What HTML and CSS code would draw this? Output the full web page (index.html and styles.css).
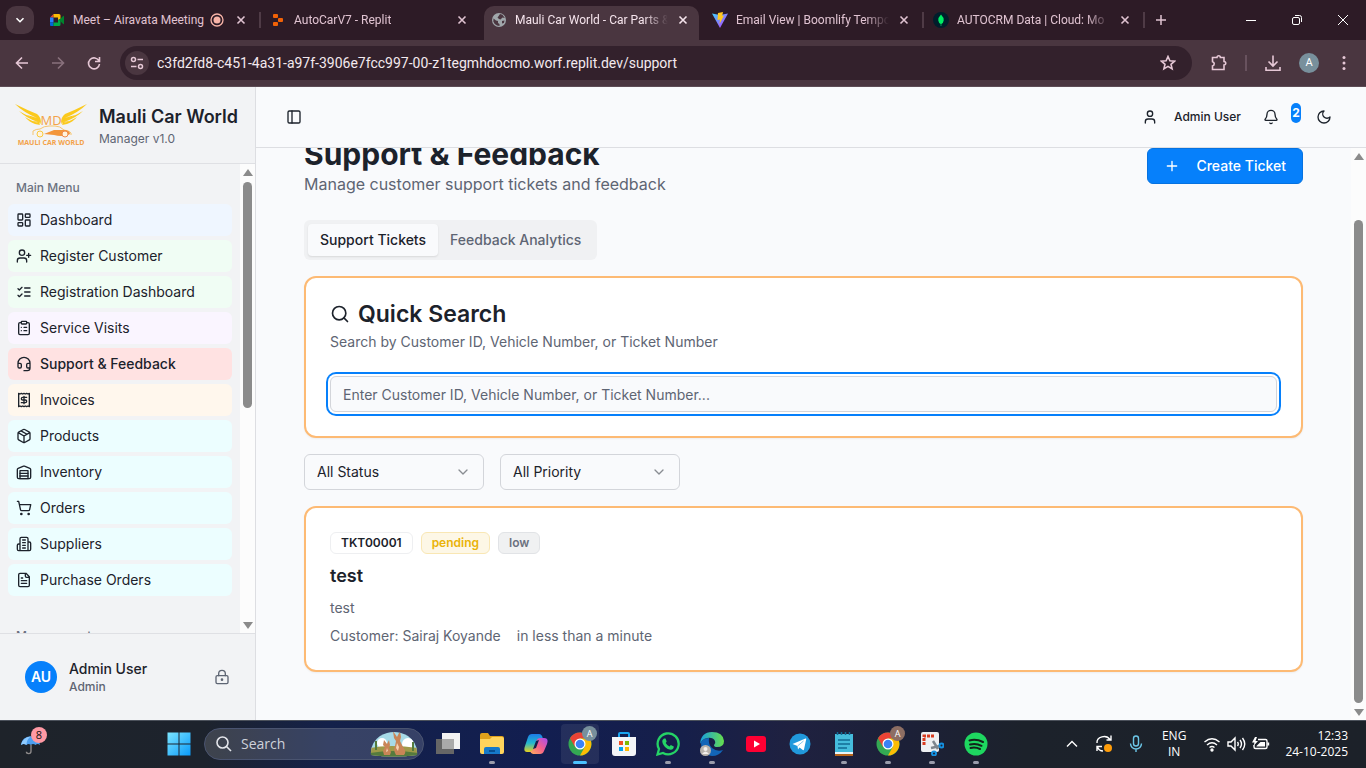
FILE: index.html
```html
<!DOCTYPE html>
<html lang="en">
<head>
<meta charset="utf-8">
<meta name="viewport" content="width=device-width, initial-scale=1">
<title>Mauli Car World - Car Parts &amp; Service</title>
<link rel="stylesheet" href="styles.css">
</head>
<body>
<div class="tabstrip">
  <button class="tab-search" aria-label="Search tabs"><svg class="g10" viewBox="0 0 10 10"><path d="M1.500 3.200 5 6.700 8.500 3.200"/></svg></button>
  <div class="tabs">
    <div class="tab">
      <svg class="fav" viewBox="0 0 16 16"><path fill="#e94335" d="M1 5.500 4.500 2v3.500z"/><path fill="#fbbc04" d="M4.500 2H10q1.500 0 1.500 1.500V7L9 8V5.500H4.500z"/><path fill="#2684fc" d="M1 5.500h3.500v5H1z"/><path fill="#0066da" d="M1 10.500h3.500V14H2q-1 0-1-1z"/><path fill="#00ac47" d="M4.500 10.500H9V8l2.500-1v5.500q0 1.500-1.500 1.500H4.500z"/><path fill="#00832d" d="M10 8l4.200-4q.8-.5.800.500v7q0 1-.8.500z"/></svg>
      <span class="tab-title">Meet – Airavata Meeting</span>
      <svg class="rec" viewBox="0 0 14 14"><circle cx="7" cy="7" r="6" fill="none" stroke="#f8b4a8" stroke-width="1.300"/><circle cx="7" cy="7" r="3.500" fill="#f8b4a8"/></svg>
      <button class="close" aria-label="Close tab"><svg class="g10" viewBox="0 0 10 10"><path d="m1.500 1.500 7 7m0-7-7 7"/></svg></button>
    </div>
    <div class="tab divided">
      <svg class="fav" viewBox="0 0 16 16"><g fill="#f26207"><rect x="3" y="2" width="5" height="4" rx="1"/><rect x="8" y="6" width="5" height="4" rx="1"/><rect x="3" y="10" width="5" height="4" rx="1"/></g></svg>
      <span class="tab-title">AutoCarV7 - Replit</span>
      <button class="close" aria-label="Close tab"><svg class="g10" viewBox="0 0 10 10"><path d="m1.500 1.500 7 7m0-7-7 7"/></svg></button>
    </div>
    <div class="tab active">
      <svg class="fav" viewBox="0 0 16 16"><circle cx="8" cy="8" r="7" fill="#a0a7ab"/><path fill="#4a3640" d="M2.500 6.500 5 8.500l2 .5v2l1.500 1v2L6 13.500Q3 12 2.300 9.500zM9 2l2.500.8L13.800 6l-2.300-.5L9.500 7.500 8 7 6.500 5.500l1-1.200zM11 9l2.500-.5-.6 2.500-1.900.5z"/></svg>
      <span class="tab-title">Mauli Car World - Car Parts &amp;</span>
      <button class="close" aria-label="Close tab"><svg class="g10" viewBox="0 0 10 10"><path d="m1.500 1.500 7 7m0-7-7 7"/></svg></button>
    </div>
    <div class="tab">
      <svg class="fav" viewBox="0 0 16 16"><defs><linearGradient id="vite" x1="0" y1="0" x2="1" y2="1"><stop offset="0" stop-color="#41d1ff"/><stop offset="1" stop-color="#bd34fe"/></linearGradient></defs><path fill="url(#vite)" d="M0 1.500 8 3l8-1.500L8 16z"/><path fill="#ffc81f" d="m6 1 5-1-.8 4 1.800-.4L7.500 12 8 7.500 5.500 8z"/></svg>
      <span class="tab-title">Email View | Boomlify Tempo</span>
      <button class="close" aria-label="Close tab"><svg class="g10" viewBox="0 0 10 10"><path d="m1.500 1.500 7 7m0-7-7 7"/></svg></button>
    </div>
    <div class="tab divided">
      <svg class="fav" viewBox="0 0 16 16"><circle cx="8" cy="8" r="8" fill="#001e2b"/><path fill="#00ed64" d="M8 2.500q3 3 2.700 6Q10.400 11 8.300 12v2h-.6v-2Q5.600 11 5.300 8.500 5 5.500 8 2.500z"/></svg>
      <span class="tab-title">AUTOCRM Data | Cloud: Mo</span>
      <button class="close" aria-label="Close tab"><svg class="g10" viewBox="0 0 10 10"><path d="m1.500 1.500 7 7m0-7-7 7"/></svg></button>
    </div>
    <button class="new-tab" aria-label="New tab"><svg viewBox="0 0 12 12"><path d="M6 1v10M1 6h10"/></svg></button>
  </div>
  <div class="window-controls">
    <button aria-label="Minimize"><svg viewBox="0 0 12 12"><path d="M1 6.500h10"/></svg></button>
    <button aria-label="Restore"><svg viewBox="0 0 12 12"><rect x="1.500" y="3.500" width="7" height="7" rx="1.500"/><path d="M4 1.500h4.500a2 2 0 0 1 2 2V8"/></svg></button>
    <button aria-label="Close window"><svg viewBox="0 0 12 12"><path d="m1 1 10 10M11 1 1 11"/></svg></button>
  </div>
</div>

<div class="toolbar">
  <button class="nav" aria-label="Back"><svg viewBox="0 0 16 16"><path d="M14 8H2.500M8 2.500 2.500 8 8 13.500"/></svg></button>
  <button class="nav off" aria-label="Forward" disabled><svg viewBox="0 0 16 16"><path d="M2 8h11.500M8 2.500 13.500 8 8 13.500"/></svg></button>
  <button class="nav" aria-label="Reload"><svg viewBox="0 0 16 16"><path d="M13 6A5.500 5.500 0 1 0 13.500 9M13.500 2v4.500H9"/></svg></button>
  <div class="omnibox">
    <button class="site-info" aria-label="Site information"><svg viewBox="0 0 14 14"><circle cx="3.500" cy="3.500" r="2"/><path d="M7.500 3.500H13M1 10.500h5.500"/><circle cx="10.500" cy="10.500" r="2"/></svg></button>
    <input class="url" type="text" aria-label="Address" value="c3fd2fd8-c451-4a31-a97f-3906e7fcc997-00-z1tegmhdocmo.worf.replit.dev/support">
    <button class="nav" aria-label="Bookmark this tab"><svg viewBox="0 0 16 16"><path d="m8 1.500 1.900 4.300 4.600.4-3.500 3.100 1.100 4.600L8 11.400l-4.100 2.500L5 9.300 1.500 6.200l4.600-.4z"/></svg></button>
  </div>
  <div class="tools">
    <button class="nav big" aria-label="Extensions"><svg viewBox="0 0 18 18"><path d="M2.500 3.500H7a1.700 1.700 0 0 1 3.400 0H14v4a1.700 1.700 0 0 1 0 3.500v4.500H2.500V12a2.200 2.200 0 0 0 0-4.300z"/></svg></button>
    <span class="tool-sep"></span>
    <button class="nav big" aria-label="Downloads"><svg viewBox="0 0 18 18"><path d="M9 1.500V12M4.500 7.500 9 12l4.500-4.500M2 13v3.200h14V13"/></svg></button>
    <button class="profile" aria-label="Profile">A</button>
    <button class="nav" aria-label="Menu"><svg class="dots" viewBox="0 0 16 16"><circle cx="8" cy="2.500" r="1.500"/><circle cx="8" cy="8" r="1.500"/><circle cx="8" cy="13.500" r="1.500"/></svg></button>
  </div>
</div>

<div class="app">
  <aside class="sidebar">
    <div class="brand">
      <svg class="brand-logo" viewBox="0 0 72 44" role="img" aria-label="Mauli Car World logo">
        <g fill="#fbc91d"><path d="M0 1q12 6 22 10 4 3 4 9-8-5-15-8 6 1 11 3Q8 9 0 1z"/><path d="M4 8q10 6 18 8l4 5q-5-2-10-3 4 0 7 1Q11 15 4 8z"/><path d="M10 14q8 5 14 6l1 2-5-1Q14 19 10 14z"/><path d="M72 1q-12 6-22 10-4 3-4 9 8-5 15-8-6 1-11 3Q64 9 72 1z"/><path d="M68 8q-10 6-18 8l-4 5q5-2 10-3-4 0-7 1 12-4 19-11z"/><path d="M62 14q-8 5-14 6l-1 2 5-1q6-2 10-7z"/></g>
        <text class="logo-mark" x="36" y="22" text-anchor="middle" font-size="13" fill="#f3a24a">MD</text>
        <path fill="none" stroke="#f7c56e" d="M18 32v-4q3-2 7-2 4-3 9-3h6q5 0 9 4 6 1 7 3v2"/><path fill="#f3963b" d="m29 31 10-4h12q4 1 4 4l-2 1q-7 2-14 0z"/><circle cx="25" cy="31" r="3" fill="#fff3dc" stroke="#f9c93e"/><circle cx="50" cy="31" r="3" fill="#fff3dc" stroke="#ee8a4c"/>
        <text x="36" y="42" text-anchor="middle" font-size="7" fill="#f3a24a">MAULI CAR WORLD</text>
      </svg>
      <div>
        <div class="brand-name">Mauli Car World</div>
        <div class="brand-sub">Manager v1.0</div>
      </div>
    </div>
    <div class="side-body">
      <nav class="menu">
        <div class="menu-label">Main Menu</div>
        <a class="item blue" href="#"><svg class="ic" viewBox="0 0 24 24"><rect x="3" y="3" width="7" height="9" rx="1"/><rect x="14" y="3" width="7" height="5" rx="1"/><rect x="14" y="12" width="7" height="9" rx="1"/><rect x="3" y="16" width="7" height="5" rx="1"/></svg>Dashboard</a>
        <a class="item green" href="#"><svg class="ic" viewBox="0 0 24 24"><path d="M16 21v-2a4 4 0 0 0-4-4H6a4 4 0 0 0-4 4v2M19 8v6M22 11h-6"/><circle cx="9" cy="7" r="4"/></svg>Register Customer</a>
        <a class="item green" href="#"><svg class="ic" viewBox="0 0 24 24"><path d="m3 17 2 2 4-4M3 7l2 2 4-4M13 6h8M13 12h8M13 18h8"/></svg>Registration Dashboard</a>
        <a class="item purple" href="#"><svg class="ic" viewBox="0 0 24 24"><rect x="8" y="2" width="8" height="4" rx="1"/><path d="M16 4h2a2 2 0 0 1 2 2v14a2 2 0 0 1-2 2H6a2 2 0 0 1-2-2V6a2 2 0 0 1 2-2h2M12 11h4M12 16h4M8 11h.01M8 16h.01"/></svg>Service Visits</a>
        <a class="item red current" href="#" aria-current="page"><svg class="ic" viewBox="0 0 24 24"><path d="M3 11h3a2 2 0 0 1 2 2v3a2 2 0 0 1-2 2H5a2 2 0 0 1-2-2v-5Zm0 0a9 9 0 1 1 18 0m0 0v5a2 2 0 0 1-2 2h-1a2 2 0 0 1-2-2v-3a2 2 0 0 1 2-2h3ZM21 16v2a4 4 0 0 1-4 4h-5"/></svg>Support &amp; Feedback</a>
        <a class="item orange" href="#"><svg class="ic" viewBox="0 0 24 24"><path d="M4 2v20l2-1 2 1 2-1 2 1 2-1 2 1 2-1 2 1V2l-2 1-2-1-2 1-2-1-2 1-2-1-2 1ZM16 8h-6a2 2 0 1 0 0 4h4a2 2 0 1 1 0 4H8M12 17.500v-11"/></svg>Invoices</a>
        <a class="item cyan" href="#"><svg class="ic" viewBox="0 0 24 24"><path d="M11 21.730a2 2 0 0 0 2 0l7-4A2 2 0 0 0 21 16V8a2 2 0 0 0-1-1.730l-7-4a2 2 0 0 0-2 0l-7 4A2 2 0 0 0 3 8v8a2 2 0 0 0 1 1.730zM12 22V12M3.290 7 12 12l8.710-5M7.500 4.270l9 5.150"/></svg>Products</a>
        <a class="item cyan" href="#"><svg class="ic" viewBox="0 0 24 24"><path d="M22 8.350V20a2 2 0 0 1-2 2H4a2 2 0 0 1-2-2V8.350A2 2 0 0 1 3.260 6.500l8-3.200a2 2 0 0 1 1.480 0l8 3.200A2 2 0 0 1 22 8.350ZM6 18h12M6 14h12"/><rect x="6" y="10" width="12" height="12"/></svg>Inventory</a>
        <a class="item cyan" href="#"><svg class="ic" viewBox="0 0 24 24"><circle cx="8" cy="21" r="1"/><circle cx="19" cy="21" r="1"/><path d="M2.050 2.050h2l2.660 12.420a2 2 0 0 0 2 1.580h9.780a2 2 0 0 0 1.950-1.570l1.650-7.430H5.120"/></svg>Orders</a>
        <a class="item cyan" href="#"><svg class="ic" viewBox="0 0 24 24"><path d="M6 22V4a2 2 0 0 1 2-2h8a2 2 0 0 1 2 2v18ZM6 12H4a2 2 0 0 0-2 2v6a2 2 0 0 0 2 2h2M18 9h2a2 2 0 0 1 2 2v9a2 2 0 0 1-2 2h-2M10 6h4M10 10h4M10 14h4M10 18h4"/></svg>Suppliers</a>
        <a class="item cyan" href="#"><svg class="ic" viewBox="0 0 24 24"><path d="M15 2H6a2 2 0 0 0-2 2v16a2 2 0 0 0 2 2h12a2 2 0 0 0 2-2V7ZM14 2v4a2 2 0 0 0 2 2h4M10 9H8M16 13H8M16 17H8"/></svg>Purchase Orders</a>
        <div class="menu-label next">Management</div>
      </nav>
      <div class="scroll" aria-hidden="true"><span class="up"></span><span class="track"><span class="thumb side-thumb"></span></span><span class="down"></span></div>
    </div>
    <div class="account">
      <span class="avatar">AU</span>
      <div class="account-text">
        <div class="account-name">Admin User</div>
        <div class="account-role">Admin</div>
      </div>
      <button class="icon-btn muted" aria-label="Change password"><svg class="ic" viewBox="0 0 24 24"><circle cx="12" cy="16" r="1"/><rect x="3" y="10" width="18" height="12" rx="2"/><path d="M7 10V7a5 5 0 0 1 10 0v3"/></svg></button>
    </div>
  </aside>

  <main class="main">
    <header class="topbar">
      <button class="icon-btn" aria-label="Toggle sidebar"><svg class="ic" viewBox="0 0 24 24"><rect x="3" y="3" width="18" height="18" rx="2"/><path d="M9 3v18"/></svg></button>
      <div class="top-right">
        <button class="user-btn"><svg class="ic" viewBox="0 0 24 24"><path d="M19 21v-2a4 4 0 0 0-4-4H9a4 4 0 0 0-4 4v2"/><circle cx="12" cy="7" r="4"/></svg>Admin User</button>
        <button class="bell-btn" aria-label="Notifications, 2 new"><svg class="ic" viewBox="0 0 24 24"><path d="M10.268 21a2 2 0 0 0 3.464 0M3.262 15.326A1 1 0 0 0 4 17h16a1 1 0 0 0 .74-1.673C19.410 13.956 18 12.499 18 8A6 6 0 0 0 6 8c0 4.499-1.411 5.956-2.738 7.326"/></svg><span class="count">2</span></button>
        <button class="icon-btn" aria-label="Toggle theme"><svg class="ic" viewBox="0 0 24 24"><path d="M12 3a6 6 0 0 0 9 9 9 9 0 1 1-9-9Z"/></svg></button>
      </div>
    </header>
    <div class="view">
      <div class="content">
        <div class="page-head">
          <div>
            <h1>Support &amp; Feedback</h1>
            <p class="lead">Manage customer support tickets and feedback</p>
          </div>
          <button class="primary"><svg class="ic" viewBox="0 0 24 24"><path d="M5 12h14M12 5v14"/></svg>Create Ticket</button>
        </div>
        <div class="segmented" role="tablist">
          <button class="seg on" role="tab" aria-selected="true">Support Tickets</button>
          <button class="seg" role="tab" aria-selected="false">Feedback Analytics</button>
        </div>
        <section class="card">
          <h2><svg class="ic lg" viewBox="0 0 24 24"><circle cx="11" cy="11" r="8"/><path d="m21 21-4.300-4.300"/></svg>Quick Search</h2>
          <p class="desc"><label for="q">Search by Customer ID, Vehicle Number, or Ticket Number</label></p>
          <input class="field" id="q" type="text" placeholder="Enter Customer ID, Vehicle Number, or Ticket Number...">
        </section>
        <div class="filters">
          <div class="pick"><select aria-label="Status"><option>All Status</option><option>Pending</option></select><svg class="ic" viewBox="0 0 24 24"><path d="m6 9 6 6 6-6"/></svg></div>
          <div class="pick"><select aria-label="Priority"><option>All Priority</option><option>Low</option></select><svg class="ic" viewBox="0 0 24 24"><path d="m6 9 6 6 6-6"/></svg></div>
        </div>
        <article class="card">
          <div class="badges"><span class="badge">TKT00001</span><span class="badge pending">pending</span><span class="badge low">low</span></div>
          <h3>test</h3>
          <p class="body">test</p>
          <div class="meta"><span>Customer: Sairaj Koyande</span><span>in less than a minute</span></div>
        </article>
      </div>
      <div class="scroll" aria-hidden="true"><span class="up"></span><span class="track end"><span class="thumb main-thumb"></span></span><span class="down"></span></div>
    </div>
  </main>
</div>

<footer class="taskbar">
  <button class="weather" aria-label="Widgets"><svg viewBox="0 0 24 24"><path d="M12 13v7q0 2.500-2.500 2.500T7 20.500" fill="none" stroke="#8d8a8a" stroke-width="1.500"/><path fill="#4d9ff0" d="M1 13Q2 4 12 3.500 20 4 22 13q-3-2-5 0-3-2-5 0-3-2-5 0-3-2-6 0z"/><path fill="#8fcbff" d="M7 13q0-6 5-9.500Q3 5 1 13q3-2 6 0z"/></svg><span class="weather-count">8</span></button>
  <div class="dock">
    <button class="app-btn" aria-label="Start"><svg viewBox="0 0 24 24"><defs><linearGradient id="win" x1="0" y1="0" x2="1" y2="1"><stop offset="0" stop-color="#7ce5ff"/><stop offset="1" stop-color="#0a9bfa"/></linearGradient></defs><path fill="url(#win)" d="M.5.500h11v11H.5zm12 0h11v11h-11zm-12 12h11v11H.5zm12 0h11v11h-11z"/></svg></button>
    <div class="dock-search">
      <svg viewBox="0 0 16 16"><circle cx="6.500" cy="6.500" r="5.500"/><path d="m10.500 10.500 4.500 4.500"/></svg>
      <input type="text" placeholder="Search" aria-label="Search Windows">
      <svg class="scene" viewBox="0 0 48 26"><defs><clipPath id="dome"><path d="M1 24Q0 12 10 5 24-3 38 5q10 7 9 19-23 3-46 0z"/></clipPath></defs><g clip-path="url(#dome)"><path fill="#a7dbe8" d="M0 0h48v26H0z"/><circle cx="12" cy="12" r="5" fill="#fff"/><circle cx="38" cy="13" r="6" fill="#fff"/><path fill="#9f9a49" d="M0 17q20-4 48 0v9H0z"/><path fill="#567b3d" d="M0 22q24-4 48 0v4H0zM5 10h2v9H5zM42 11h2v9h-2z"/><path fill="#c98557" d="m23 0 4 6 3-6 1 6-1 4 3 6q4 5 1 8h-8q-3-4-1-9l1-5-2-3zM14 9l3 4 2-4 1 5-1 3 2 4-1 3h-6l-1-4 2-4-2-2z"/><path fill="#f4d3b4" d="m27 12 2 4-1 4-2-3zM17 17l1 3-2 1z"/></g></svg>
    </div>
    <button class="app-btn" aria-label="Task view"><svg viewBox="0 0 24 24"><path fill="#666" d="M0 7h18v15H0z"/><path fill="#f2f2f2" d="M6 1h18v16H6z"/><path fill="#aaa" d="M6 7h12v10H6z"/></svg></button>
    <button class="app-btn run" aria-label="File Explorer"><svg class="wide" viewBox="0 0 26 24"><path fill="#e0a11b" d="M1 3q0-2 2-2h6l2 3h12q2 0 2 2v5H1z"/><path fill="#ffd45c" d="M1 7h10l2-2h10q2 0 2 2v13q0 2-2 2H3q-2 0-2-2z"/><path fill="#1679c9" d="M5 22v-5q0-2 2-2h12q2 0 2 2v5z"/><path stroke="#074f91" stroke-width="2" d="M10 19h6"/></svg></button>
    <button class="app-btn" aria-label="Copilot"><svg viewBox="0 0 24 24"><defs><linearGradient id="cpa" x1="0" y1="0" x2="0" y2="1"><stop offset="0" stop-color="#1d7ce8"/><stop offset=".5" stop-color="#22b8cf"/><stop offset="1" stop-color="#e8d21d"/></linearGradient><linearGradient id="cpb" x1="1" y1="0" x2="0" y2="1"><stop offset="0" stop-color="#a54df0"/><stop offset=".5" stop-color="#f45f8c"/><stop offset="1" stop-color="#ffb15a"/></linearGradient></defs><path fill="url(#cpa)" d="M8 2h7q3 0 4 5h-3q-3 0-4 4l-2 6q-1 3-4 3H3q-4 0-2-6l3-9q1-3 4-3z"/><path fill="url(#cpb)" d="M16 22H9q-2 0-3-3 3 0 4-3l2-6q1-4 4-4h4q5 0 3 6l-3 7q-1 3-4 3z"/><path fill="#14204d" d="m12 9 3-1-3 8-3 1z"/></svg></button>
    <button class="app-btn run focused" aria-label="Google Chrome"><svg viewBox="0 0 24 24"><circle cx="12" cy="12" r="11.500" fill="#34a853"/><path fill="#ea4335" d="M2 6.300A11.500 11.500 0 0 1 22 6.500H12L7 15z"/><path fill="#fbbc05" d="M22 6.500A11.500 11.500 0 0 1 12 23.500l5-9-5-8z"/><circle cx="12" cy="12" r="5.500" fill="#fff"/><circle cx="12" cy="12" r="4.300" fill="#3b82f6"/></svg><span class="who">A</span></button>
    <button class="app-btn" aria-label="Microsoft Store"><svg viewBox="0 0 24 24"><path fill="none" stroke="#1ba5ef" stroke-width="2" d="M7 6V2q0-1 1-1h8q1 0 1 1v4"/><path fill="#f3f5f7" d="M0 5h24v16q0 3-3 3H3q-3 0-3-3z"/><path fill="#f25022" d="M7 9h4v4H7z"/><path fill="#7fba00" d="M13 9h4v4h-4z"/><path fill="#00a4ef" d="M7 15h4v4H7z"/><path fill="#ffb900" d="M13 15h4v4h-4z"/></svg></button>
    <button class="app-btn run" aria-label="WhatsApp"><svg viewBox="0 0 24 24"><path fill="none" stroke="#25d366" stroke-width="2.300" d="M1.500 22.500 3 17A10.500 10.500 0 1 1 7 21z"/><path fill="#25d366" d="M8 6.500h1.500l1.200 3-1 1.500q1.300 2.500 3.800 3.500l1.300-1.500 3 1.500q0 3-3 3.300Q12 18 9 15 5.500 11 6.500 8z"/></svg></button>
    <button class="app-btn run" aria-label="Microsoft Edge"><svg viewBox="0 0 24 24"><defs><linearGradient id="edge" x1="0" y1="0" x2="1" y2="0"><stop offset="0" stop-color="#179de2"/><stop offset="1" stop-color="#67df4b"/></linearGradient></defs><path fill="#1265b8" d="M1 10q3-4 8-4-1 6 3 10 5 4 11 2-4 6-11 6Q1 23 1 10z"/><path fill="url(#edge)" d="M0 12Q1 0 12 0q11 0 12 9 0 6-7 6-3 0-3-2 2-2 1-4-2-4-8-3-5 1-7 6z"/><circle cx="5.500" cy="18.500" r="5.500" fill="#b9b3ad"/><circle cx="5.500" cy="17" r="2" fill="#f3efec"/><path fill="#f3efec" d="M2 22q3.500-5 7 0z"/></svg></button>
    <button class="app-btn" aria-label="YouTube"><svg viewBox="0 0 24 24"><rect x="2" y="4" width="20" height="16" rx="3" fill="#ff0033"/><path fill="#fff" d="m10 8.500 6 3.500-6 3.500z"/></svg></button>
    <button class="app-btn" aria-label="Telegram"><svg viewBox="0 0 24 24"><circle cx="12" cy="12" r="10.500" fill="#2199dc"/><path fill="#fff" d="m4.500 12 13-5.500q1-.3.700.8L16 17.500q-.3 1-1.200.5L11.500 15.500 10 17.500l-.5-3.500z"/><path stroke="#87c8ea" d="m9.500 14 6-5"/></svg></button>
    <button class="app-btn run" aria-label="Notepad"><svg viewBox="0 0 24 24"><path fill="#45bcdc" d="M3 2h18v18H3z"/><path fill="#e8f4f8" d="M3 20h18v2H3z"/><path fill="#b8651b" d="M3 22h18v2H3z"/><path stroke="#126b94" stroke-width="1.500" d="M6 8h12M6 12h12M6 16h9M5.500 0v3M9.500 0v3M13.500 0v3M17.500 0v3"/></svg></button>
    <button class="app-btn run" aria-label="Google Chrome, second profile"><svg viewBox="0 0 24 24"><circle cx="12" cy="12" r="11.500" fill="#34a853"/><path fill="#ea4335" d="M2 6.300A11.500 11.500 0 0 1 22 6.500H12L7 15z"/><path fill="#fbbc05" d="M22 6.500A11.500 11.500 0 0 1 12 23.500l5-9-5-8z"/><circle cx="12" cy="12" r="5.500" fill="#fff"/><circle cx="12" cy="12" r="4.300" fill="#3b82f6"/></svg><span class="who brown">A</span></button>
    <button class="app-btn run" aria-label="Snipping Tool"><svg viewBox="0 0 24 24"><rect x="1" width="18" height="20" rx="2" fill="#eef0f2"/><path fill="none" stroke="#d83b1f" stroke-width="3" stroke-dasharray="3 1" d="M4 13V4h11"/><path stroke="#7d858d" stroke-width="2.500" d="m13 9 5 8M20 14l-9 2"/><g fill="none" stroke="#1491e0" stroke-width="2"><circle cx="21.500" cy="13.500" r="2"/><circle cx="14" cy="21.500" r="2"/></g></svg></button>
    <button class="app-btn run" aria-label="Spotify"><svg viewBox="0 0 24 24"><circle cx="12" cy="12" r="11.500" fill="#1ed760"/><path fill="none" stroke="#12241a" stroke-linecap="round" stroke-width="2" d="M5.500 8.500Q12 6.500 19 10M6 12.500q6-1.700 11.500 1.300M6.500 16q5-1.200 9.500 1"/></svg></button>
  </div>
  <div class="tray">
    <button aria-label="Show hidden icons"><svg viewBox="0 0 20 20"><path d="m5 12.500 5-5 5 5"/></svg></button>
    <button aria-label="Sync"><svg viewBox="0 0 20 20"><path d="M3 9a7 6 0 0 1 13-3.500M17 1.500V6h-4.500M9 17q-4 0-5.500-4M8 12.500H3V17"/><circle cx="14" cy="14" r="4" fill="#ff9d0a" stroke="none"/></svg></button>
    <button aria-label="Microphone"><svg viewBox="0 0 20 20"><g stroke="#6cc7e8"><rect x="7.500" y="2" width="5" height="10" rx="2.500"/><path d="M4.500 9.500a5.500 5.500 0 0 0 11 0M10 15v3"/></g></svg></button>
    <button class="lang">ENG<br>IN</button>
    <button class="status" aria-label="Network, sound and battery"><svg viewBox="0 0 20 20"><path d="M2.500 8Q10 1.500 17.500 8M5 11q5-4.500 10 0M7.500 13.500q2.500-2 5 0"/><circle cx="10" cy="16" r="1" fill="#fff"/></svg><svg viewBox="0 0 20 20"><path d="M2 8h3l4-4v12l-4-4H2zM11.500 8q1.500 2 0 4M14 6q3 4 0 8M16.500 4q4.500 6 0 12"/></svg><svg viewBox="0 0 20 20"><path d="M8 5.500h7.500q1.500 0 1.500 1.500v6q0 1.500-1.500 1.500h-10Q4 14.500 4 13v-2M18.500 8.500v3"/><path fill="#fff" stroke="none" d="M10.500 8H15v4.500H6.500V12zM5 3 2 8.500h2.500L3.500 12 8 7H5.500L7 3z"/></svg></button>
    <button class="clock">12:33<br>24-10-2025</button>
  </div>
</footer>
</body>
</html>
```

FILE: styles.css
```css
* { box-sizing: border-box; }
body {
  margin: 0;
  height: 100vh;
  display: flex;
  flex-direction: column;
  overflow: hidden;
  font-family: Inter, "Liberation Sans", sans-serif;
  font-size: 14px;
  line-height: 20px;
  color: #1c222b;
  background: #f9fafc;
}
button, input, select { font: inherit; color: inherit; }
button { border: 0; padding: 0; background: none; display: flex; align-items: center; justify-content: center; }
h1, h2, h3, p { margin: 0; }
a { color: inherit; text-decoration: none; }
svg { display: block; flex: none; }
.ic { width: 16px; height: 16px; fill: none; stroke: currentColor; stroke-width: 2; stroke-linecap: round; stroke-linejoin: round; }
.lg { width: 20px; height: 20px; }

/* Browser tabs */
.tabstrip, .toolbar, .taskbar { flex: none; display: flex; align-items: center; }
.tabstrip, .toolbar { font-family: Roboto, "Open Sans", sans-serif; }
.tabstrip { height: 40px; padding-left: 6px; background: #2d1b26; color: #e0c3d1; font-size: 12px; }
.tab-search { width: 28px; height: 28px; border-radius: 10px; background: #4a3640; color: #fff; }
.g10 { width: 10px; height: 10px; fill: none; stroke: currentColor; stroke-width: 1.6; }
.tabs { flex: 1; min-width: 0; height: 40px; padding-left: 4px; display: flex; align-items: center; }
.tab { position: relative; flex: 0 1 221px; min-width: 0; display: flex; align-items: center; gap: 8px; height: 40px; padding: 0 11px 0 11px; }
.tab-title { flex: 1; min-width: 0; overflow: hidden; white-space: nowrap; mask-image: linear-gradient(to right, #000 calc(100% - 24px), transparent); }
.fav { width: 16px; height: 16px; }
.rec { width: 14px; height: 14px; margin-left: -4px; }
.close { width: 14px; height: 14px; }
.tab:first-child .tab-title { mask-image: none; }
.rec + .close { margin-left: 2px; }
.divided::before { content: ""; position: absolute; left: 0; top: 12px; width: 2px; height: 16px; background: #4f3b46; }
.divided + .new-tab { border-left: 2px solid #4f3b46; }
.active { color: #f5e4ec; }
.active::before { content: ""; position: absolute; z-index: 0; left: 4px; right: 2px; top: 6px; bottom: 0; border-radius: 10px 10px 0 0; background: #4a3640; }
.active > * { z-index: 1; }
.new-tab { height: 16px; padding-left: 10px; }
.new-tab svg, .window-controls svg { width: 12px; height: 12px; fill: none; stroke: currentColor; stroke-width: 1.5; }
.window-controls { display: flex; color: #fff; }
.window-controls button { width: 46px; height: 40px; }
.window-controls svg { stroke-width: 1; }

/* Address bar */
.toolbar { height: 47px; padding: 0 14px; gap: 20px; background: #4a3640; border-bottom: 1px solid #5d4c55; color: #e6c8d6; }
.nav { width: 16px; height: 16px; }
.nav svg { width: 16px; height: 16px; fill: none; stroke: currentColor; stroke-width: 1.6; }
.nav .dots { fill: currentColor; stroke: none; }
.off { opacity: .4; }
.big, .nav.big svg { width: 18px; height: 18px; }
.omnibox { flex: 1; min-width: 0; height: 34px; margin: 0 -2px; display: flex; align-items: center; gap: 8px; padding: 0 16px 0 5px; border-radius: 17px; background: #33212c; }
.site-info { width: 24px; height: 24px; border-radius: 12px; background: #4a3640; }
.site-info svg { width: 14px; height: 14px; fill: none; stroke: currentColor; stroke-width: 1.5; }
.url { flex: 1; min-width: 0; border: 0; padding: 0; outline: 0; background: none; font-size: 14px; color: #f3e9ee; }
.tools { display: flex; align-items: center; gap: 17px; }
.tool-sep { width: 2px; height: 16px; background: #68525e; }
.profile { width: 20px; height: 20px; border-radius: 10px; background: #78909c; color: #fff; font-size: 11px; }

/* App shell */
.app { flex: 1; min-height: 0; display: flex; }
.sidebar { width: 256px; flex: none; display: flex; flex-direction: column; background: #f2f3f5; border-right: 1px solid #dddee2; }
.brand { display: flex; align-items: center; gap: 12px; padding: 16px 16px 16px 15px; border-bottom: 1px solid #dfe0e4; }
.brand-logo { width: 72px; height: 44px; font-family: "Open Sans", sans-serif; font-weight: 700; }
.logo-mark { font-weight: 400; }
.brand-name { font-size: 18px; line-height: 28px; font-weight: 600; white-space: nowrap; }
.brand-sub { font-size: 12px; line-height: 16px; color: #5e6573; }
.side-body { flex: 1; min-height: 0; display: flex; overflow: hidden; }
.menu { flex: 1; display: flex; flex-direction: column; gap: 4px; padding: 8px; }
.menu-label { flex: none; padding: 0 8px; font-size: 12px; line-height: 32px; margin-bottom: -4px; font-weight: 500; color: #6b7180; }
.next { margin-top: 20px; }
.item { flex: none; height: 32px; display: flex; align-items: center; gap: 8px; padding: 0 8px; border-radius: 6px; }
.blue { background: #eff6ff; }
.green { background: #f0fdf4; }
.purple { background: #faf5ff; }
.red { background: #ffe2e2; }
.orange { background: #fff7ed; }
.cyan { background: #ecfeff; }
.current { font-weight: 500; }
.scroll { width: 15px; flex: none; display: flex; flex-direction: column; align-items: center; gap: 6px; padding: 5px 0 4px; background: #fcfcfc; }
.up, .down { border: 5px solid transparent; }
.up { border-top-width: 0; border-bottom: 7px solid #8b8b8b; }
.down { border-bottom-width: 0; border-top: 7px solid #8b8b8b; }
.track { flex: 1; display: flex; }
.end { align-items: flex-end; }
.thumb { width: 9px; border-radius: 5px; background: #8b8b8b; }
.side-thumb { height: 52%; }
.main-thumb { height: 90%; }
.account { display: flex; align-items: center; gap: 12px; padding: 24px 24px 24px 25px; border-top: 1px solid #dfe0e4; height: 87px; }
.avatar { width: 32px; height: 32px; border-radius: 16px; background: #0680fb; color: #fff; display: grid; place-items: center; font-weight: 600; }
.account-text { flex: 1; }
.account-name { line-height: 20px; font-weight: 500; }
.account-role { font-size: 12px; line-height: 16px; font-weight: 500; color: #5e6573; }
.icon-btn { width: 16px; height: 16px; margin: 0 1px; }
.muted { color: #5e6573; }

.main { flex: 1; min-width: 0; display: flex; flex-direction: column; }
.topbar { height: 61px; flex: none; display: flex; align-items: center; justify-content: space-between; padding: 0 33px 0 29px; border-bottom: 1px solid #dddee2; }
.top-right { display: flex; align-items: center; gap: 14px; }
.user-btn { gap: 16px; margin-right: 8px; font-size: 12px; font-weight: 500; }
.bell-btn { gap: 12px; }
.count { margin-bottom: 8px; width: 10px; border-radius: 5px; background: #0680fb; color: #fff; font-size: 12px; font-weight: 700; line-height: 20px; }
.view { flex: 1; min-height: 0; display: flex; overflow: hidden; }
/* Scrolled part-way down, so the heading runs under the top bar */
.content { flex: 1; min-width: 0; display: flex; flex-direction: column; gap: 16px; margin-top: -12px; padding: 0 48px; }
.page-head { display: flex; align-items: center; justify-content: space-between; margin-bottom: 8px; }
h1 { font-size: 30px; line-height: 36px; font-weight: 700; }
.lead { font-size: 16px; line-height: 24px; color: #5e6573; }
.primary { gap: 16px; height: 36px; padding: 0 16px; border: 1px solid #0672e0; border-radius: 6px; background: #0680fb; color: #fff; font-weight: 500; }
.segmented { align-self: flex-start; display: flex; height: 40px; padding: 4px; border-radius: 6px; background: #f0f1f3; color: #5e6573; }
.seg { padding: 0 12px; border-radius: 4px; font-weight: 500; }
.on { background: #f9fafc; color: #1c222b; box-shadow: 0 1px 2px #0000001a; }
.card { padding: 24px; background: #fff; border: 2px solid #fdba74; border-radius: 12px; box-shadow: 0 1px 2px #0000000d; }
h2 { display: flex; align-items: center; gap: 8px; font-size: 23px; line-height: 24px; font-weight: 600; margin-bottom: 6px; }
.desc { color: #5e6573; margin-bottom: 24px; }
.field { display: block; width: 100%; height: 36px; padding: 0 12px; border: 1px solid #d3d5da; border-radius: 6px; background: #f9fafc; outline: 0; box-shadow: 0 0 0 2px #fff, 0 0 0 4px #0680fb; }
.field::placeholder { color: #5e6573; opacity: 1; }
.filters { display: flex; gap: 16px; }
.pick { position: relative; width: 180px; }
.pick select { display: block; width: 100%; height: 36px; padding: 0 12px; appearance: none; border: 1px solid #d3d5da; border-radius: 6px; background: #f9fafc; }
.pick .ic { position: absolute; right: 13px; top: 10px; opacity: .5; pointer-events: none; }
.badges { display: flex; gap: 8px; margin-bottom: 8px; }
.badge { padding: 0 10px; border: 1px solid #eeeff1; border-radius: 6px; font-size: 12px; line-height: 20px; font-weight: 600; }
.pending { color: #eab308; background: #fdf7e6; border-color: #f9e7b4; }
.low { color: #6b7280; background: #f0f1f2; border-color: #e1e3e6; }
h3 { font-size: 18px; line-height: 28px; font-weight: 600; margin-bottom: 8px; }
.body { color: #5e6573; margin-bottom: 8px; }
.meta { display: flex; gap: 16px; color: #5e6573; }

/* Desktop taskbar */
.taskbar { font-family: "Open Sans", "Noto Sans", sans-serif; height: 48px; padding: 0 15px 1px 18px; border-top: 1px solid #4b515b; background: linear-gradient(to right, #1e232a 0, #1d232d 15%, #14214a 24%, #121e50 40%, #161f4a 50%, #1f2140 58%, #1c2038 66%, #1c222b 75%, #1c2129 100%); color: #fff; font-size: 12px; line-height: 16px; }
.weather { position: relative; width: 26px; height: 32px; }
.weather svg { width: 22px; height: 24px; }
.weather-count { position: absolute; right: -3px; top: -1px; width: 16px; height: 16px; border-radius: 8px; background: #ff99a4; color: #111; font-size: 11px; }
.dock { display: flex; align-items: center; margin-left: 113px; }
.app-btn { position: relative; width: 44px; height: 40px; border-radius: 4px; }
.app-btn svg { width: 24px; height: 24px; }
.app-btn .wide { width: 26px; }
.run::after { content: ""; position: absolute; bottom: 0; left: 19px; width: 6px; height: 3px; border-radius: 2px; background: #9a9cab; }
.focused { width: 38px; margin: 0 3px; background: #ffffff14; }
.focused::after { left: 12px; width: 14px; background: #4cc2ff; }
.who { position: absolute; right: 5px; top: 2px; width: 15px; height: 15px; border-radius: 8px; background: #78909c; font-size: 9px; line-height: 15px; }
.focused .who { right: 2px; }
.brown { background: #8d6e63; }
.dock-search { width: 220px; height: 32px; margin: 0 2px 0 3px; display: flex; align-items: center; gap: 9px; padding: 0 5px 0 11px; border: 1px solid #4a5470; border-radius: 16px; background: #ffffff26; }
.dock-search svg { width: 16px; height: 16px; fill: none; stroke: #e4e6eb; stroke-width: 1.6; }
.dock-search .scene { width: 48px; height: 26px; stroke: none; }
.dock-search input { flex: 1; min-width: 0; padding: 0; border: 0; outline: 0; background: none; font-size: 14px; }
.dock-search input::placeholder { color: #ced1da; opacity: 1; }
.tray { margin-left: auto; display: flex; align-items: center; gap: 12px; }
.tray svg { width: 20px; height: 20px; fill: none; stroke: #fff; stroke-width: 1.4; }
.lang { display: block; padding: 0 4px; font-size: 12px; text-align: center; }
.status { gap: 4px; margin-right: 3px; }
.clock { display: block; padding-right: 3px; font-size: 12px; text-align: right; }
```
